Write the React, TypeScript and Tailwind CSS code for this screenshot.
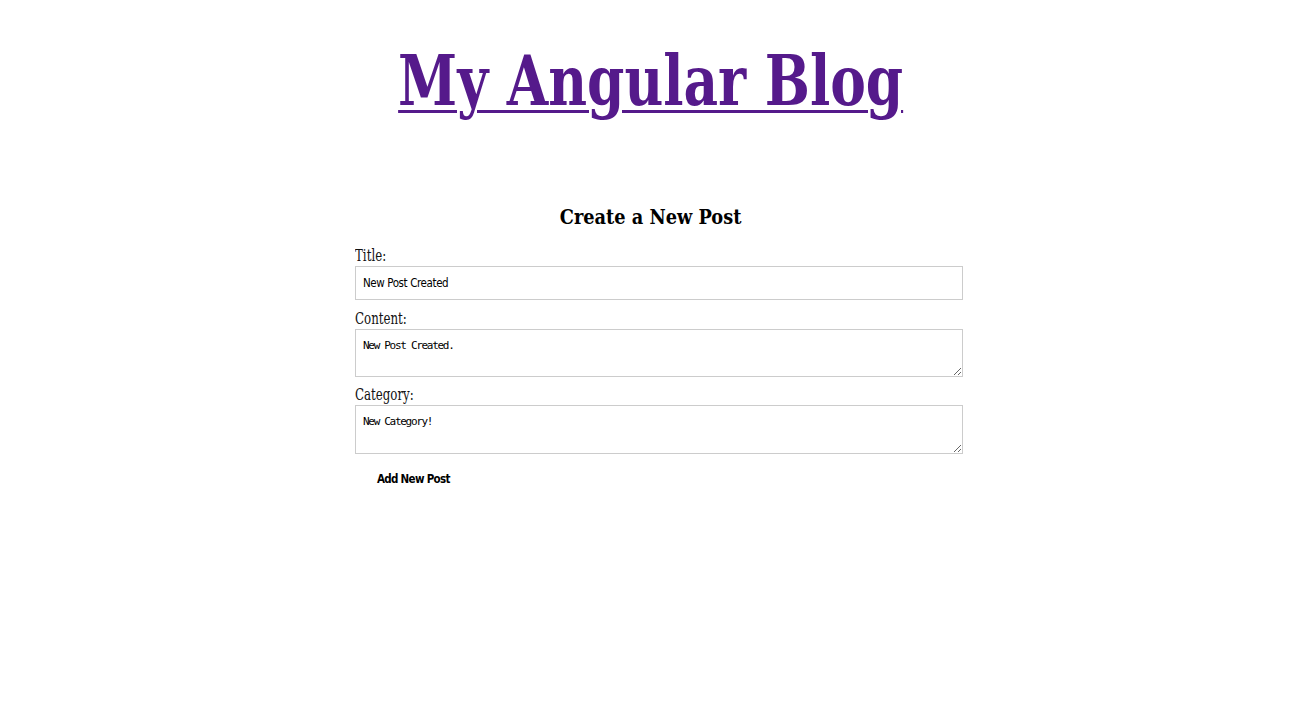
export default function App() {
  return (
    <div className="min-h-[725px] bg-white pl-3 [font-family:'DejaVu_Serif',serif]">
      <header className="pt-[36px] text-center">
        <h1 className="m-0 text-[69px] font-bold leading-[90px] font-stretch-condensed">
          <a
            href="#"
            className="inline-block origin-center scale-x-[0.86] text-[#551a8b] underline decoration-[3px] underline-offset-[5px]"
          >
            My Angular Blog
          </a>
        </h1>
      </header>

      <main className="mx-auto mt-[76px] w-[592px]">
        <h2 className="mb-[14px] text-center text-[21px] font-bold leading-[30px] text-black font-stretch-condensed">
          <span className="inline-block origin-center scale-x-[0.94]">Create a New Post</span>
        </h2>

        <form className="flex flex-col font-stretch-condensed">
          <label className="text-[16px] leading-[20px] text-[#111]">
            <span className="inline-block origin-left scale-x-[0.82]">Title:</span>
          </label>
          <input
            type="text"
            defaultValue="New Post Created"
            className="h-[34px] w-[608px] border border-[#ccc] px-[7px] text-[11.5px] tracking-[-0.4px] text-black outline-none font-stretch-condensed [font-family:'DejaVu_Sans',sans-serif]"
          />

          <label className="mt-[9px] text-[16px] leading-[20px] text-[#111]">
            <span className="inline-block origin-left scale-x-[0.82]">Content:</span>
          </label>
          <textarea
            defaultValue="New Post Created."
            className="h-[48px] w-[608px] border border-[#ccc] px-[7px] py-[9px] text-[11px] leading-[14px] tracking-[-1.3px] text-black outline-none [font-family:'DejaVu_Sans_Mono',monospace]"
          />

          <label className="mt-[8px] text-[16px] leading-[20px] text-[#111]">
            <span className="inline-block origin-left scale-x-[0.82]">Category:</span>
          </label>
          <textarea
            defaultValue="New Category!"
            className="h-[49px] w-[608px] border border-[#ccc] px-[7px] py-[9px] text-[11px] leading-[14px] tracking-[-1.3px] text-black outline-none [font-family:'DejaVu_Sans_Mono',monospace]"
          />

          <div className="mt-[12px]">
            <button
              type="button"
              className="ml-[22px] bg-white text-[11.5px] font-bold tracking-[-0.7px] text-black font-stretch-condensed [font-family:'DejaVu_Sans',sans-serif]"
            >
              Add New Post
            </button>
          </div>
        </form>
      </main>
    </div>
  );
}
